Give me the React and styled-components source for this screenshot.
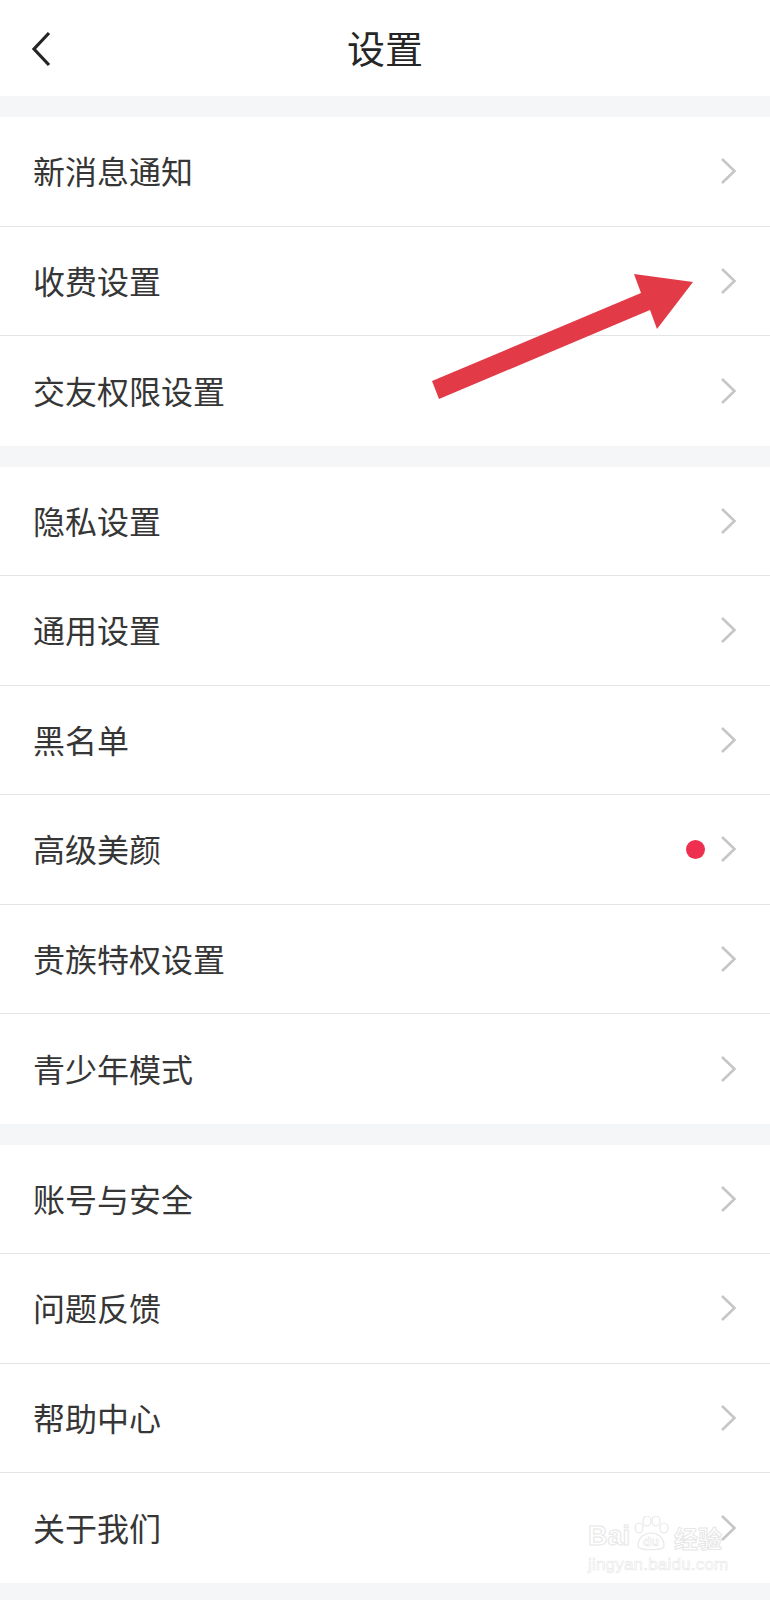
import React from 'react';
import styled, { createGlobalStyle } from 'styled-components';

const GlobalStyle = createGlobalStyle`
  html, body {
    margin: 0;
    padding: 0;
    background: #f5f6f8;
  }
  body {
    font-family: "Noto Sans CJK SC", "Noto Sans", sans-serif;
  }
`;

const sections = [
  ['新消息通知', '收费设置', '交友权限设置'],
  ['隐私设置', '通用设置', '黑名单', '高级美颜', '贵族特权设置', '青少年模式'],
  ['账号与安全', '问题反馈', '帮助中心', '关于我们'],
];

const dotted = ['高级美颜'];

function App() {
  return (
    <>
      <GlobalStyle />
      <Page>
        <Header>
          <BackButton>
            <svg width="22" height="36" viewBox="0 0 22 36">
              <polyline points="19,2 4,18 19,34" fill="none" stroke="#252525" strokeWidth="3.2" strokeLinejoin="miter" />
            </svg>
          </BackButton>
          <Title>设置</Title>
          <span />
        </Header>

        {sections.map((items, i) => (
          <Section key={i}>
            {items.map((label) => (
              <Row key={label}>
                <Label>{label}</Label>
                <Trail>
                  {dotted.includes(label) && <Dot />}
                  <svg width="17" height="28" viewBox="0 0 17 28">
                    <polyline points="2,2 14.5,14 2,26" fill="none" stroke="#c6c6c6" strokeWidth="2.6" />
                  </svg>
                </Trail>
              </Row>
            ))}
          </Section>
        ))}

        <Arrow width="770" height="420" viewBox="0 0 770 420">
          <polygon
            points="432,381 641,293 634,274 693,282 657,329 650,310 439,399"
            fill="#e33a48"
          />
        </Arrow>

        <Watermark>
          <MarkTop>
            <span>Bai</span>
            <Paw>
              <svg width="42" height="36" viewBox="0 0 42 36">
                <g fill="none" stroke="#e8e8e8" strokeWidth="1.2">
                  <ellipse cx="9" cy="12" rx="4" ry="5" />
                  <ellipse cx="17" cy="5" rx="4" ry="5" />
                  <ellipse cx="26" cy="5" rx="4" ry="5" />
                  <ellipse cx="34" cy="12" rx="4" ry="5" />
                  <path d="M8 30 C8 20 16 17 21 17 C26 17 34 20 34 30 C34 35 8 35 8 30 Z" />
                </g>
              </svg>
              <PawText>du</PawText>
            </Paw>
            <span>经验</span>
          </MarkTop>
          <MarkUrl>jingyan.baidu.com</MarkUrl>
        </Watermark>
      </Page>
    </>
  );
}

const Page = styled.div`
  position: relative;
  width: 770px;
  min-height: 1600px;
  background: #f5f6f8;
  overflow: hidden;
`;

const Header = styled.div`
  height: 96px;
  background: #ffffff;
  display: grid;
  grid-template-columns: 1fr auto 1fr;
  align-items: center;
  padding: 0 0 0 30px;
  box-sizing: border-box;
`;

const BackButton = styled.div`
  display: flex;
  align-items: center;
  height: 36px;
  margin-top: 1px;
`;

const Title = styled.div`
  font-size: 38px;
  color: #262626;
  line-height: 1;
  margin: -3px 0 0 -30px;
`;

const Section = styled.div`
  background: #ffffff;
  margin-top: 21px;
`;

const Row = styled.div`
  height: 109.5px;
  box-sizing: border-box;
  padding: 0 33px;
  display: flex;
  align-items: center;
  justify-content: space-between;
  border-bottom: 1px solid #e4e4e4;

  &:last-child {
    border-bottom: none;
  }
`;

const Label = styled.div`
  font-size: 32px;
  color: #363636;
  line-height: 1;
  margin-top: -2px;
`;

const Trail = styled.div`
  display: flex;
  align-items: center;
  gap: 15px;
`;

const Dot = styled.div`
  width: 19px;
  height: 19px;
  border-radius: 50%;
  background: #ef2f50;
`;

const Arrow = styled.svg`
  position: absolute;
  left: 0;
  top: 0;
  pointer-events: none;
`;

const Watermark = styled.div`
  position: absolute;
  left: 588px;
  top: 1516px;
  display: flex;
  flex-direction: column;
  align-items: flex-start;
  pointer-events: none;
  color: #ffffff;
  -webkit-text-stroke: 1px #e6e6e6;
`;

const MarkTop = styled.div`
  display: flex;
  align-items: flex-end;
  font-family: "Liberation Sans", sans-serif;
  font-size: 27px;
  font-weight: 700;
  line-height: 1;

  span:last-child {
    font-family: "Noto Sans CJK SC", sans-serif;
    font-size: 24px;
    margin-left: 2px;
  }
`;

const Paw = styled.div`
  position: relative;
  width: 42px;
  height: 36px;
  margin-bottom: -2px;
`;

const PawText = styled.div`
  position: absolute;
  left: 0;
  right: 0;
  bottom: 4px;
  text-align: center;
  font-size: 13px;
  -webkit-text-stroke: 0.6px #e6e6e6;
`;

const MarkUrl = styled.div`
  font-family: "Liberation Sans", sans-serif;
  font-size: 17px;
  line-height: 1;
  margin-top: 6px;
  -webkit-text-stroke: 0.6px #e8e8e8;
  letter-spacing: 0.2px;
`;

export default App;
